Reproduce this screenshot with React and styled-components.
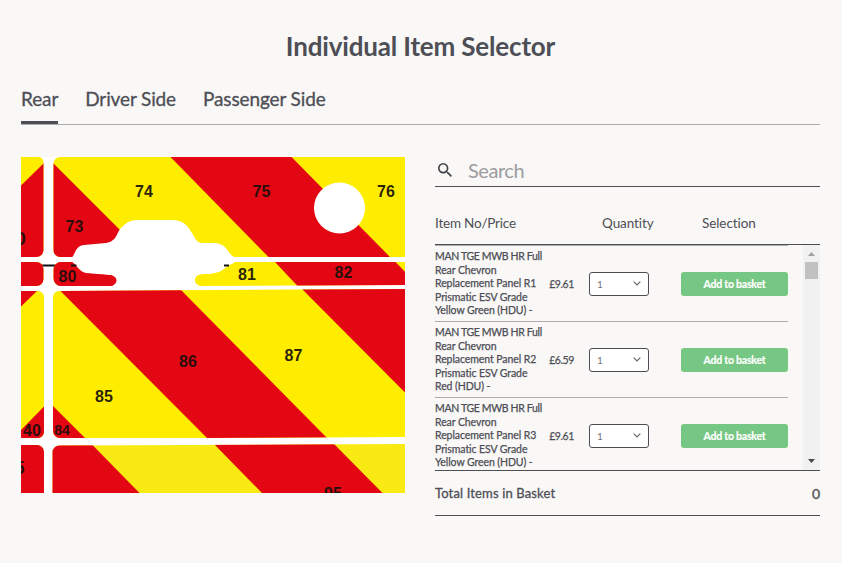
import React, { useState } from 'react';
import styled, { createGlobalStyle } from 'styled-components';

const TABS = ['Rear', 'Driver Side', 'Passenger Side'];

const ITEMS = [
  { id: 'R1', lines: ['MAN TGE MWB HR Full', 'Rear Chevron', 'Replacement Panel R1', 'Prismatic ESV Grade', 'Yellow Green (HDU) -'], price: '£9.61' },
  { id: 'R2', lines: ['MAN TGE MWB HR Full', 'Rear Chevron', 'Replacement Panel R2', 'Prismatic ESV Grade', 'Red (HDU) -'], price: '£6.59' },
  { id: 'R3', lines: ['MAN TGE MWB HR Full', 'Rear Chevron', 'Replacement Panel R3', 'Prismatic ESV Grade', 'Yellow Green (HDU) -'], price: '£9.61' },
];

const LABELS = [
  { x: 144, y: 196.5, text: '74' },
  { x: 261.5, y: 196.5, text: '75' },
  { x: 386, y: 197, text: '76' },
  { x: 74.5, y: 231.5, text: '73' },
  { x: 67.5, y: 281.5, text: '80' },
  { x: 247, y: 279.5, text: '81' },
  { x: 343.5, y: 278, text: '82' },
  { x: 188, y: 367, text: '86' },
  { x: 293.5, y: 360.5, text: '87' },
  { x: 104, y: 402, text: '85' },
  { x: 32, y: 436, text: '40' },
  { x: 62, y: 434.5, text: '84', size: 14 },
  { x: 333, y: 498.5, text: '95' },
  { x: 20.5, y: 245, text: '0', size: 19 },
  { x: 19.5, y: 474, text: '5', size: 18 },
];

const RED = '#e30613';
const YELLOW = '#ffed00';

const PanelDiagram = () => (
  <Diagram viewBox="21 157 384 336">
    <defs>
      <clipPath id="panels">
        <path d="M21 157H38.500a5 5 0 0 1 5 5V250a7 7 0 0 1-7 7H21Z" />
        <path d="M60 157H405V257H60a6.500 6.500 0 0 1-6.500-6.500V163.500a6.500 6.500 0 0 1 6.500-6.500Z" />
        <path d="M21 262H36.500a7 7 0 0 1 7 7V279a7 7 0 0 1-7 7H21Z" />
        <path d="M61 262H405V285L200 286H61a7.500 7.500 0 0 1-7.500-7.500V269.500a7.500 7.500 0 0 1 7.500-7.500Z" />
        <path d="M21 291H38a6 6 0 0 1 6 6V432a6 6 0 0 1-6 6H21Z" />
        <path d="M59 291L405 289V437L200 438H60a7 7 0 0 1-7-7V297a6 6 0 0 1 6-6Z" />
        <path d="M21 445H37a7 7 0 0 1 7 7V493H21Z" />
        <path d="M60 445.500L405 444V493H52.500V452.500a7 7 0 0 1 7.500-7Z" />
      </clipPath>
    </defs>
    <rect x="21" y="157" width="384" height="336" fill="#fff" />
    <path d="M40 265.500H230" stroke="#111" strokeWidth="2" />
    <g clipPath="url(#panels)">
      <rect x="21" y="157" width="384" height="287" fill={YELLOW} />
      <rect x="21" y="441" width="384" height="52" fill="#f9ea13" />
      <g fill={RED}>
        <path d="M21 185.500L44 163V258H21Z" />
        <path d="M53 163L122 232V258H53Z" />
        <path d="M170.500 157H291.500L390.500 257.500H269Z" />
        <path d="M21 261H180V287H21Z" />
        <path d="M274.500 261.500H395L420 287H298.500Z" />
        <path d="M21 290H38L21 306.500Z" />
        <path d="M59.500 290H181L327.500 438.500H207.500Z" />
        <path d="M301.500 288.500H405V392.500Z" />
        <path d="M21 430L44 406.500V439H21Z" />
        <path d="M53 406L85.500 438.500H53Z" />
        <path d="M21 444H44V493H21Z" />
        <path d="M52 444H91.500L139.500 493H52Z" />
        <path d="M214 444H334L382.500 493H262Z" />
      </g>
    </g>
    {/* door handle recess */}
    <path
      d="M71 258C75 257 74 246 84 245L106 243C118 241 116 232 122 227C128 221 131 220 140 220H172C183 220 187 225 192 233C196 240 197 243 203 243H213C227 243 227 253 234 257L239 259.500L232 264C223 267 224 274 205 274C197 274 195 277 195 280C195 286 201 286 207 287H107C119 286 117 275 109 275L86 273C79 272 76 263 70 261Z"
      fill="#fff"
    />
    <path d="M54 279V269a7.500 7.500 0 0 1 7.500-7H69C74 262 76 266 78 269C81 274 87 273.500 91 274L108 275C113 275 116.500 277 116.500 280.500C116.500 284 113 286 109 286H61a7.500 7.500 0 0 1-7-7Z" fill={RED} />
    <path d="M71 265.500H76.500" stroke="#111" strokeWidth="2" />
    <path d="M224 265.500H229" stroke="#111" strokeWidth="2" />
    <circle cx="339.500" cy="208" r="25.500" fill="#fff" />
    {LABELS.map((label) => (
      <PanelNumber key={label.text} x={label.x} y={label.y} $size={label.size}>
        {label.text}
      </PanelNumber>
    ))}
  </Diagram>
);

const ItemRow = ({ item }) => (
  <Row>
    <ItemName>
      {item.lines.map((line) => (
        <NameLine key={line}>{line}</NameLine>
      ))}
    </ItemName>
    <Price>{item.price}</Price>
    <Quantity>
      1
      <Chevron viewBox="0 0 8 5">
        <path d="M0.700 0.700L4 4L7.300 0.700" />
      </Chevron>
    </Quantity>
    <AddButton>Add to basket</AddButton>
  </Row>
);

const App = () => {
  const [activeTab, setActiveTab] = useState('Rear');

  return (
    <Page>
      <GlobalStyle />
      <Title>Individual Item Selector</Title>
      <TabBar>
        {TABS.map((tab) => (
          <Tab key={tab} $active={tab === activeTab} onClick={() => setActiveTab(tab)}>
            {tab}
          </Tab>
        ))}
      </TabBar>
      <Content>
        <PanelDiagram />
        <Selector>
          <SearchBar>
            <SearchIcon viewBox="3 3 17.500 17.500">
              <path d="M15.500 14h-.79l-.28-.27A6.471 6.471 0 0 0 16 9.500 6.500 6.500 0 1 0 9.500 16c1.610 0 3.090-.59 4.230-1.570l.27.28v.79l5 4.990L20.490 19l-4.990-5zm-6 0C7.010 14 5 11.990 5 9.500S7.010 5 9.500 5 14 7.010 14 9.500 11.990 14 9.500 14z" />
            </SearchIcon>
            <SearchInput placeholder="Search" />
          </SearchBar>
          <ListHeader>
            <HeaderCell>Item No/Price</HeaderCell>
            <HeaderCell>Quantity</HeaderCell>
            <HeaderCell>Selection</HeaderCell>
          </ListHeader>
          <ListArea>
            <Rows>
              {ITEMS.map((item) => (
                <ItemRow key={item.id} item={item} />
              ))}
            </Rows>
            <ScrollTrack>
              <ScrollArrow viewBox="0 0 7 4"><path d="M0 4L3.500 0L7 4Z" fill="#a0a0a0" /></ScrollArrow>
              <ScrollThumb />
              <ScrollArrow viewBox="0 0 7 4"><path d="M0 0L3.500 4L7 0Z" fill="#484848" /></ScrollArrow>
            </ScrollTrack>
          </ListArea>
          <Total>
            <TotalLabel>Total Items in Basket</TotalLabel>
            <TotalCount>0</TotalCount>
          </Total>
        </Selector>
      </Content>
    </Page>
  );
};

const GlobalStyle = createGlobalStyle`
  * {
    box-sizing: border-box;
  }

  body {
    margin: 0;
    background: #f9f8f6;
    color: #4d4e56;
    font-family: Lato, sans-serif;
  }
`;

const Page = styled.div`
  width: 842px;
  height: 563px;
  padding: 28px 22px 0 21px;
  overflow: hidden;
`;

const Title = styled.h1`
  margin: 0;
  font-size: 26px;
  font-weight: 700;
  letter-spacing: -0.17px;
  line-height: 36px;
  text-align: center;
`;

const TabBar = styled.div`
  display: flex;
  gap: 27px;
  height: 44px;
  margin-top: 17px;
  border-bottom: 1px solid #adadad;
`;

const Tab = styled.button`
  height: 43px;
  padding: 0 0 5px;
  border: 0;
  border-bottom: 3px solid ${({ $active }) => ($active ? '#4d4e56' : 'transparent')};
  background: none;
  color: inherit;
  font-family: inherit;
  font-size: 19px;
  letter-spacing: -0.12px;
  line-height: 29px;
  white-space: nowrap;
  -webkit-text-stroke: 0.3px;
`;

const Content = styled.div`
  display: flex;
  gap: 30px;
  margin-top: 32px;
`;

const Diagram = styled.svg`
  flex: none;
  width: 384px;
  height: 336px;
`;

const PanelNumber = styled.text`
  fill: #160f0c;
  fill-opacity: 0.93;
  font-family: 'Liberation Sans', Arial, sans-serif;
  font-size: ${({ $size }) => $size || 16}px;
  font-weight: 700;
  text-anchor: middle;
`;

const Selector = styled.div`
  width: 385px;
`;

const SearchBar = styled.div`
  display: flex;
  align-items: center;
  height: 30px;
  padding-left: 3px;
  border-bottom: 1px solid #4d4e56;
`;

const SearchIcon = styled.svg`
  width: 14px;
  height: 14px;
  margin: 0 16px 4px 0;
  fill: #404148;
`;

const SearchInput = styled.input`
  flex: 1;
  min-width: 0;
  padding: 0 0 4px;
  border: 0;
  outline: 0;
  background: none;
  font-family: inherit;
  font-size: 20px;
  letter-spacing: -0.45px;

  &::placeholder {
    color: #9c9ca0;
  }
`;

const ListHeader = styled.div`
  display: grid;
  grid-template-columns: 167px 100px 1fr;
  align-items: center;
  height: 58px;
  padding-top: 14px;
  border-bottom: 1px solid #4d4e56;
`;

const HeaderCell = styled.span`
  font-size: 13.5px;
  letter-spacing: -0.2px;
  white-space: nowrap;

  &:not(:first-child) {
    letter-spacing: -0.08px;
  }
`;

const ListArea = styled.div`
  display: flex;
  justify-content: space-between;
  height: 226px;
  overflow: hidden;
  border-bottom: 1px solid #4d4e56;
`;

const Rows = styled.div`
  width: 353px;
`;

const Row = styled.div`
  display: flex;
  align-items: center;
  height: 76px;
  border-top: 1px solid #adadad;
`;

const ItemName = styled.div`
  width: 109px;
  padding-top: 1px;
`;

const NameLine = styled.div`
  font-size: 10.5px;
  letter-spacing: -0.08px;
  line-height: 13.5px;
  white-space: nowrap;
  -webkit-text-stroke: 0.25px;

  &:first-child {
    letter-spacing: -0.34px;
  }
`;

const Price = styled.div`
  width: 30px;
  font-size: 10.5px;
  letter-spacing: -0.4px;
  text-align: right;
  -webkit-text-stroke: 0.25px;
`;

const Quantity = styled.button`
  display: flex;
  align-items: center;
  justify-content: space-between;
  width: 60px;
  height: 24px;
  margin-left: 15px;
  padding: 0 7px;
  border: 1px solid #4d4e56;
  border-radius: 3px;
  background: #fff;
  color: #77777c;
  font-family: inherit;
  font-size: 10px;
`;

const Chevron = styled.svg`
  width: 8px;
  height: 5px;
  fill: none;
  stroke: #66676c;
  stroke-width: 1.2;
`;

const AddButton = styled.button`
  width: 107px;
  height: 24px;
  margin-left: 32px;
  padding: 0;
  border: 0;
  border-radius: 3px;
  background: #76c783;
  color: #fff;
  font-family: inherit;
  font-size: 10.5px;
  font-weight: 700;
  letter-spacing: -0.22px;
  -webkit-text-stroke: 0.2px;
`;

const ScrollTrack = styled.div`
  display: flex;
  flex-direction: column;
  align-items: center;
  width: 17px;
  padding: 7px 0 7px;
  background: #f1f1f1;
`;

const ScrollArrow = styled.svg`
  width: 7px;
  height: 4px;
`;

const ScrollThumb = styled.div`
  width: 13px;
  height: 17px;
  margin: 6px 0 auto;
  background: #c1c1c1;
`;

const Total = styled.div`
  display: flex;
  align-items: center;
  justify-content: space-between;
  height: 45px;
  border-bottom: 1px solid #4d4e56;
`;

const TotalLabel = styled.span`
  font-size: 13px;
  letter-spacing: 0.14px;
  -webkit-text-stroke: 0.3px;
`;

const TotalCount = styled.span`
  font-size: 14px;
  -webkit-text-stroke: 0.3px;
`;

export default App;
